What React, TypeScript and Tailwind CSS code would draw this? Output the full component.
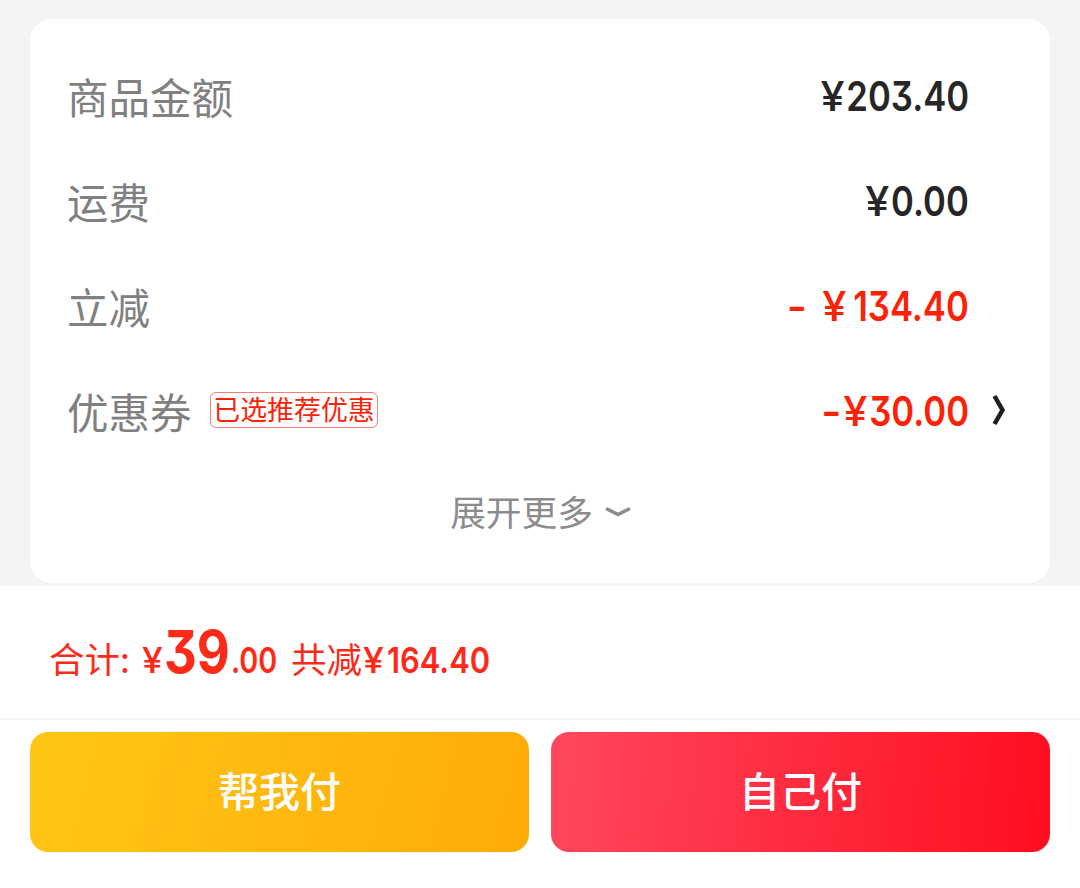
import clsx from 'clsx';

interface PriceRow {
  label: string;
  amount: string;
  sign?: string;
  signGap?: string;
  discount?: boolean;
  tag?: string;
  hasMore?: boolean;
}

const rows: PriceRow[] = [
  { label: '商品金额', amount: '203.40' },
  { label: '运费', amount: '0.00' },
  { label: '立减', amount: '134.40', sign: '-', signGap: 'mr-6', discount: true },
  { label: '优惠券', amount: '30.00', sign: '-', signGap: 'mr-2', discount: true, tag: '已选推荐优惠', hasMore: true },
];

// Condensed digits with a flat-top three
const digits = "inline-block whitespace-pre font-['Inter',sans-serif] [font-feature-settings:'cv09']";

function Row({ row }: { row: PriceRow }) {
  return (
    <li className="flex h-[105px] items-center">
      <span className="mb-1 text-[41.5px] leading-[60px] text-[#808080]">{row.label}</span>
      {row.tag && (
        <span className="mb-1.5 ml-[18px] flex h-9 w-[168px] items-center justify-center rounded-md border border-[#fa2c19]/60 pb-px pl-px text-[26.9px] leading-none whitespace-nowrap text-[#fa2209]">
          {row.tag}
        </span>
      )}
      <span
        className={clsx(
          digits,
          'mb-1 ml-auto origin-right scale-x-[0.845] text-[41px] leading-[60px] font-semibold',
          row.discount ? 'text-[#fa2209]' : 'text-[#262626]'
        )}
      >
        {row.sign && <span className={clsx('inline-block origin-right scale-x-[1.25]', row.signGap)}>{row.sign}</span>}
        <span
          className={clsx(
            'inline-block origin-right scale-x-[1.25] font-medium',
            // a leading 1 is narrow, so it gets more room
            row.amount.startsWith('1') ? 'mr-2' : 'mr-0.5'
          )}
        >
          ¥
        </span>
        {row.amount}
      </span>
      <span className="flex w-[45px] justify-end">
        {row.hasMore && (
          <svg className="mr-1.5 mb-1.5 h-8 w-4" viewBox="0 0 16 32" fill="none" aria-hidden="true">
            <path d="M2.5 2L10.5 16L2.5 30" stroke="#1d1f1f" strokeWidth="4.5" />
          </svg>
        )}
      </span>
    </li>
  );
}

export default function App() {
  return (
    <div className="flex h-[888px] w-[1080px] flex-col overflow-hidden bg-[#f4f4f4] font-['Noto_Sans_CJK_SC',sans-serif]">
      {/* Price details */}
      <section className="mx-[30px] mt-[19px] mb-[3px] h-[564px] rounded-[22px] bg-white pt-[26px] pr-9 pl-[37px]">
        <ul>
          {rows.map((row) => (
            <Row key={row.label} row={row} />
          ))}
        </ul>
        <button className="flex h-[92px] w-full items-center justify-center text-[35.7px] text-[#8c8c8c]">
          展开更多
          <svg className="mt-px ml-3 h-3.5 w-[26px]" viewBox="0 0 26 14" fill="none" aria-hidden="true">
            <path d="M1 3.5L13 9.5L25 3.5" stroke="#8c8c8c" strokeWidth="3.6" />
          </svg>
        </button>
      </section>

      {/* Total */}
      <section className="flex h-[132px] items-baseline bg-white pt-[26px] pl-[49px] text-[35.5px] leading-[80px] whitespace-pre text-[#fd2a19]">
        <span className="w-[93px]">合计:</span>
        <span className="w-[22px]">
          <span className={clsx(digits, 'origin-left scale-x-[1.05] font-medium')}>¥</span>
        </span>
        <span className="w-[67px]">
          <span className={clsx(digits, 'origin-left scale-x-[0.86] text-[59px] font-bold')}>39</span>
        </span>
        <span className="w-[60px]">
          <span className={clsx(digits, 'origin-left scale-x-[0.81] font-semibold')}>.00</span>
        </span>
        <span className="w-[72px]">共减</span>
        <span className="w-[24px]">
          <span className={clsx(digits, 'origin-left scale-x-[1.05] font-medium')}>¥</span>
        </span>
        <span className={clsx(digits, 'origin-left scale-x-[0.87] font-semibold')}>164.40</span>
      </section>

      {/* Payment actions */}
      <footer className="mt-0.5 flex flex-1 gap-[22px] bg-white px-[30px] pt-3">
        <button className="h-[120px] flex-1 rounded-[18px] bg-[linear-gradient(105deg,#ffc617,#ffab08)] pb-1.5 text-[41px] leading-[60px] font-medium text-white">
          帮我付
        </button>
        <button className="h-[120px] flex-1 rounded-[18px] bg-[linear-gradient(95deg,#ff485d,#ff0d20)] pb-1.5 text-[41px] leading-[60px] font-medium text-white">
          自己付
        </button>
      </footer>
    </div>
  );
}
